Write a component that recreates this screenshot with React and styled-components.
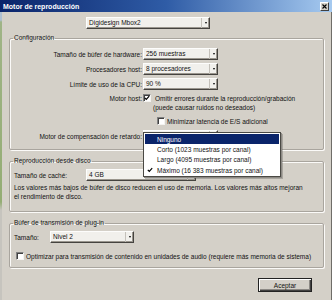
import React from 'react'
import styled, { createGlobalStyle } from 'styled-components'

const GlobalStyle = createGlobalStyle`
  html, body {
    margin: 0;
    padding: 0;
  }
  body {
    width: 332px;
    height: 300px;
    overflow: hidden;
    background: #d4d0c8;
    font-family: "Liberation Sans", Arial, sans-serif;
    font-size: 6.5px;
    color: #111;
  }
`

const Window = styled.div`
  width: 332px;
  height: 300px;
  display: flex;
  flex-direction: column;
`

const TitleBar = styled.div`
  height: 12px;
  flex: none;
  display: flex;
  align-items: center;
  justify-content: space-between;
  padding: 0 3px;
  background: linear-gradient(to right, #0a246a 0%, #2f5ca6 50%, #a6caf0 100%);
`

const Title = styled.span`
  color: #fff;
  font-weight: bold;
  font-size: 7px;
  white-space: nowrap;
`

const CloseButton = styled.span`
  width: 9px;
  height: 9px;
  box-sizing: border-box;
  display: flex;
  align-items: center;
  justify-content: center;
  background: #d4d0c8;
  border: 1px solid;
  border-color: #fff #404040 #404040 #fff;
`

const Body = styled.div`
  flex: 1;
  display: flex;
`

const Strip = styled.div`
  width: 2px;
  flex: none;
  background: linear-gradient(
    to bottom,
    #aec0d2 0px,
    #aec0d2 8px,
    #9fb486 10px,
    #94ad74 190px,
    #c6c4be 198px,
    #c6c4be 100%
  );
`

const Content = styled.div`
  flex: 1;
  display: flex;
  flex-direction: column;
  padding: 0 7px;
  border-right: 1px solid #6f6d68;
`

const Group = styled.fieldset`
  margin: ${p => p.$mt}px 0 0;
  padding: ${p => p.$pt}px 4px ${p => p.$pb}px;
  border: 1px solid #a9a59e;
  border-radius: 2px;
  box-shadow: inset 1px 1px 0 #fbfaf8, 1px 1px 0 #fbfaf8;
  min-width: 0;
`

const Legend = styled.legend`
  padding: 0 1px;
  margin-left: -1px;
  line-height: 8px;
  font-size: 6.5px;
`

const Row = styled.div`
  display: flex;
  align-items: center;
  height: ${p => p.$h || 12}px;
  margin-top: ${p => p.$mt || 0}px;
  margin-left: ${p => p.$ml || 0}px;
  white-space: nowrap;
`

const Label = styled.span`
  width: ${p => p.$w}px;
  flex: none;
  margin-right: ${p => (p.$right ? 1 : 0)}px;
  text-align: ${p => (p.$right ? 'right' : 'left')};
  white-space: nowrap;
`

const SelectWrap = styled.div`
  position: relative;
`

const Select = styled.div`
  display: flex;
  width: ${p => p.$w}px;
  height: 12px;
  box-sizing: border-box;
  background: #f1f0ec;
  border: 1px solid;
  border-color: #fdfdfc #45433f #45433f #fdfdfc;
  box-shadow: inset -1px -1px 0 #9a968e;
`

const SelectValue = styled.span`
  flex: 1;
  padding-left: 2px;
  line-height: 10px;
  white-space: nowrap;
  overflow: hidden;
`

const SelectArrow = styled.span`
  width: 7px;
  flex: none;
  display: flex;
  align-items: center;
  justify-content: center;
  border-left: 1px solid #c4c1ba;

  &::after {
    content: '';
    border-left: 1.5px solid transparent;
    border-right: 1.5px solid transparent;
    border-top: 2px solid #000;
  }
`

const Box = styled.span`
  width: 8px;
  height: 8px;
  flex: none;
  box-sizing: border-box;
  display: flex;
  align-items: center;
  justify-content: center;
  background: #fff;
  border: 1px solid;
  border-color: #808080 #f4f3f0 #f4f3f0 #808080;
  box-shadow: inset 1px 1px 0 #404040;
`

const BoxText = styled.span`
  margin-left: ${p => p.$ml}px;
`

const Note = styled.div`
  margin-top: ${p => p.$mt || 0}px;
  margin-left: ${p => p.$ml || 0}px;
  line-height: ${p => p.$lh || 10}px;
  white-space: nowrap;
`

const Popup = styled.div`
  position: absolute;
  top: 2px;
  left: 0;
  width: 138px;
  box-sizing: border-box;
  padding: 1px;
  background: #fff;
  border: 1px solid #4a4944;
  box-shadow: 1px 1px 0 #8c8984, 2px 2px 0 rgba(90, 88, 84, 0.35);
  z-index: 2;
`

const Item = styled.div`
  display: flex;
  align-items: center;
  height: 10.3px;
  padding-left: 2px;
  white-space: nowrap;
  background: ${p => (p.$active ? '#0a246a' : 'transparent')};
  color: ${p => (p.$active ? '#fff' : '#111')};
`

const Check = styled.span`
  width: 10px;
  flex: none;
  display: flex;
  align-items: center;
`

const Footer = styled.div`
  display: flex;
  justify-content: flex-end;
  margin-top: 10px;
  padding-right: 12px;
`

const Button = styled.button`
  width: 54px;
  height: 14px;
  padding: 0;
  box-sizing: border-box;
  font-family: inherit;
  font-size: 6.5px;
  color: #111;
  background: #d4d0c8;
  border: 1px solid #222;
  box-shadow: inset 1px 1px 0 #fff, inset -1px -1px 0 #404040, inset -2px -2px 0 #8c8984;
`

const Tick = () => (
  <svg width="6" height="6" viewBox="0 0 6 6">
    <path d="M0.8 2.8 L2.3 4.4 L5.2 1.2" fill="none" stroke="#000" strokeWidth="1.2" />
  </svg>
)

const Cross = () => (
  <svg width="5" height="5" viewBox="0 0 5 5">
    <path d="M0.5 0.5 L4.5 4.5 M4.5 0.5 L0.5 4.5" stroke="#000" strokeWidth="1.1" />
  </svg>
)

const delayOptions = [
  { label: 'Ninguno', active: true },
  { label: 'Corto (1023 muestras por canal)' },
  { label: 'Largo (4095 muestras por canal)' },
  { label: 'Máximo (16 383 muestras por canal)', checked: true },
]

const App = () => (
  <>
    <GlobalStyle />
    <Window>
      <TitleBar>
        <Title>Motor de reproducción</Title>
        <CloseButton>
          <Cross />
        </CloseButton>
      </TitleBar>
      <Body>
        <Strip />
        <Content>
          <Row $mt={5} $ml={77}>
            <Select $w={124}>
              <SelectValue>Digidesign Mbox2</SelectValue>
              <SelectArrow />
            </Select>
          </Row>

          <Group $mt={5} $pt={6} $pb={7}>
            <Legend>Configuración</Legend>
            <Row>
              <Label $w={128} $right>Tamaño de búfer de hardware:</Label>
              <Select $w={75}>
                <SelectValue>256 muestras</SelectValue>
                <SelectArrow />
              </Select>
            </Row>
            <Row $mt={3}>
              <Label $w={128} $right>Procesadores host:</Label>
              <Select $w={75}>
                <SelectValue>8 procesadores</SelectValue>
                <SelectArrow />
              </Select>
            </Row>
            <Row $mt={3}>
              <Label $w={128} $right>Límite de uso de la CPU:</Label>
              <Select $w={75}>
                <SelectValue>90 %</SelectValue>
                <SelectArrow />
              </Select>
            </Row>
            <Row $mt={3} $h={10}>
              <Label $w={128} $right>Motor host:</Label>
              <Box>
                <Tick />
              </Box>
              <BoxText $ml={4}>Omitir errores durante la reproducción/grabación</BoxText>
            </Row>
            <Note $ml={139}>(puede causar ruidos no deseados)</Note>
            <Row $mt={3} $h={10} $ml={143}>
              <Box />
              <BoxText $ml={2}>Minimizar latencia de E/S adicional</BoxText>
            </Row>
            <Row $mt={4}>
              <Label $w={128} $right>Motor de compensación de retardo:</Label>
              <SelectWrap>
                <Select $w={75}>
                  <SelectValue />
                  <SelectArrow />
                </Select>
                <Popup>
                  {delayOptions.map(opt => (
                    <Item key={opt.label} $active={opt.active}>
                      <Check>{opt.checked && <Tick />}</Check>
                      {opt.label}
                    </Item>
                  ))}
                </Popup>
              </SelectWrap>
            </Row>
          </Group>

          <Group $mt={7} $pt={4} $pb={10}>
            <Legend>Reproducción desde disco</Legend>
            <Row>
              <Label $w={72}>Tamaño de caché:</Label>
              <Select $w={110}>
                <SelectValue>4 GB</SelectValue>
                <SelectArrow />
              </Select>
            </Row>
            <Note $mt={3} $lh={8.5}>
              Los valores más bajos de búfer de disco reducen el uso de memoria. Los valores más altos mejoran
              <br />
              el rendimiento de disco.
            </Note>
          </Group>

          <Group $mt={7} $pt={4} $pb={6}>
            <Legend>Búfer de transmisión de plug-in</Legend>
            <Row>
              <Label $w={36}>Tamaño:</Label>
              <Select $w={84}>
                <SelectValue>Nivel 2</SelectValue>
                <SelectArrow />
              </Select>
            </Row>
            <Row $mt={8} $h={10} $ml={2}>
              <Box />
              <BoxText $ml={2}>
                Optimizar para transmisión de contenido en unidades de audio (requiere más memoria de sistema)
              </BoxText>
            </Row>
          </Group>

          <Footer>
            <Button>Aceptar</Button>
          </Footer>
        </Content>
      </Body>
    </Window>
  </>
)

export default App
